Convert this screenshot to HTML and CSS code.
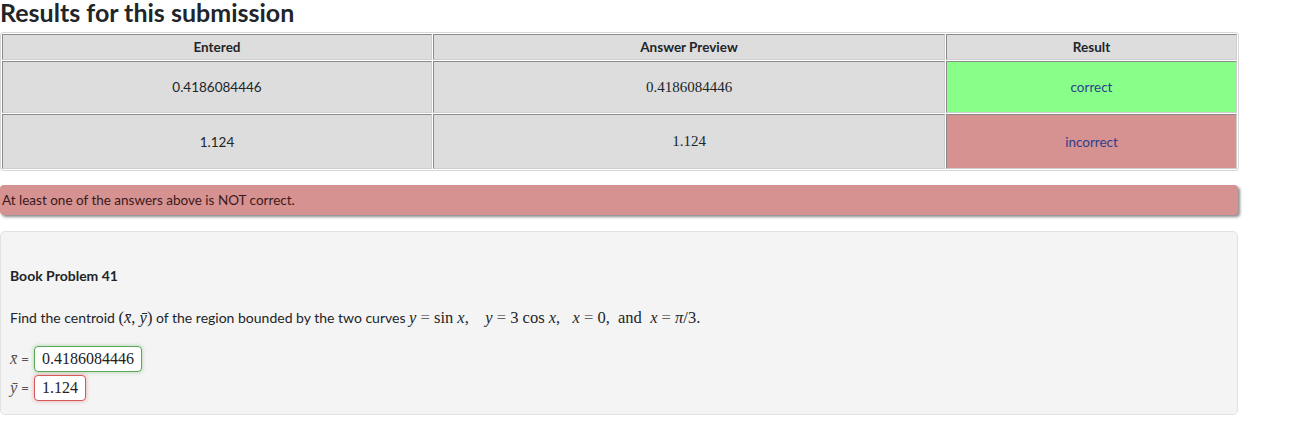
FILE: index.html
```html
<!DOCTYPE html>
<html lang="en">
<head>
<meta charset="utf-8">
<title>Results for this submission</title>
<link rel="stylesheet" href="styles.css">
</head>
<body>
<div class="page">
  <h2 class="heading">Results for this submission</h2>
  <table class="results">
    <thead>
      <tr>
        <th class="c1">Entered</th>
        <th class="c2">Answer Preview</th>
        <th class="c3">Result</th>
      </tr>
    </thead>
    <tbody>
      <tr>
        <td>0.4186084446</td>
        <td class="math">0.4186084446</td>
        <td class="res ok">correct</td>
      </tr>
      <tr class="r2">
        <td>1.124</td>
        <td class="math">1.124</td>
        <td class="res bad">incorrect</td>
      </tr>
    </tbody>
  </table>

  <div class="alert">At least one of the answers above is NOT correct.</div>

  <div class="problem">
    <p class="title">Book Problem 41</p>
    <p class="text">Find the centroid <span class="m">(<i>x̄</i>, <i>ȳ</i>)</span> of the region bounded by the two curves <span class="m"><i>y</i> <span class="op">=</span> sin <i>x</i>,&nbsp;&nbsp;&nbsp; <i>y</i> <span class="op">=</span> 3 cos <i>x</i>,&nbsp;&nbsp; <i>x</i> <span class="op">=</span> 0,&nbsp; and&nbsp; <i>x</i> <span class="op">=</span> <i>π</i>/3.</span></p>
    <div class="answers">
      <div class="ans">
        <span class="lbl"><span class="m"><i>x̄</i></span> =</span>
        <span class="box good">0.4186084446</span>
      </div>
      <div class="ans">
        <span class="lbl"><span class="m"><i>ȳ</i></span> =</span>
        <span class="box wrong">1.124</span>
      </div>
    </div>
  </div>
</div>
</body>
</html>
```

FILE: styles.css
```css
html, body {
  margin: 0;
  padding: 0;
  background: #ffffff;
}

body {
  font-family: "Lato", "Open Sans", sans-serif;
  font-size: 13.5px;
  color: #212529;
}

.page {
  width: 1238px;
}

.heading {
  margin: 0;
  font-size: 25px;
  font-weight: 700;
  line-height: 24px;
  height: 30px;
}

.results {
  width: 1237px;
  margin-top: 2px;
  border: 1px solid #d8d8d8;
  border-radius: 3px;
  border-spacing: 1px;
  border-collapse: separate;
  table-layout: fixed;
}

.results th,
.results td {
  background: #dddddd;
  border: 1px solid;
  border-color: #8a8a8a #cfcfcf #cfcfcf #8a8a8a;
  text-align: center;
  font-size: 13.5px;
  padding: 0 4px;
}

.results th {
  height: 24px;
  font-weight: 700;
}

.results td {
  height: 50px;
}

.results .r2 td {
  height: 53px;
}

.c1 { width: 420px; }
.c2 { width: 502px; }
.c3 { width: 281px; }

.results td.math {
  font-family: "Liberation Serif", "DejaVu Serif", serif;
  font-size: 15px;
}

.results td.res {
  color: #2c3f8e;
}

.results td.ok {
  background: #88ff88;
}

.results td.bad {
  background: #d69191;
}

.alert {
  margin-top: 14px;
  background: #d69191;
  color: #3a1a1a;
  border-radius: 4px;
  box-shadow: 2px 2px 3px #8a8a8a;
  height: 30px;
  line-height: 30px;
  padding-left: 2px;
  font-size: 13.5px;
}

.problem {
  margin-top: 16px;
  background: #f4f4f4;
  border: 1px solid #e2e2e2;
  border-radius: 5px;
  padding: 35px 9px 13px;
}

.problem p {
  margin: 0;
}

.title {
  font-weight: 700;
  font-size: 14px;
  line-height: 18px;
}

.text {
  margin-top: 24px !important;
  font-size: 14px;
  line-height: 18px;
}

.m {
  font-family: "Liberation Serif", "DejaVu Serif", serif;
  font-size: 16.5px;
}

.m i {
  font-style: italic;
}

.op {
  color: #666;
}

.answers {
  margin-top: 19px;
  display: flex;
  flex-direction: column;
  gap: 3px;
}

.ans {
  display: flex;
  align-items: center;
  gap: 5px;
}

.lbl {
  color: #555;
  font-size: 14px;
}

.box {
  display: inline-block;
  background: #ffffff;
  font-family: "Liberation Serif", "DejaVu Serif", serif;
  font-size: 16px;
  height: 24px;
  line-height: 24px;
  padding: 0 7px;
  border-radius: 4px;
  color: #222;
}

.box.good {
  border: 1px solid #5aaa5a;
  box-shadow: 0 0 4px rgba(70, 170, 70, 0.45);
}

.box.wrong {
  border: 1px solid #d65a5a;
  box-shadow: 0 0 4px rgba(210, 70, 70, 0.45);
}
```
